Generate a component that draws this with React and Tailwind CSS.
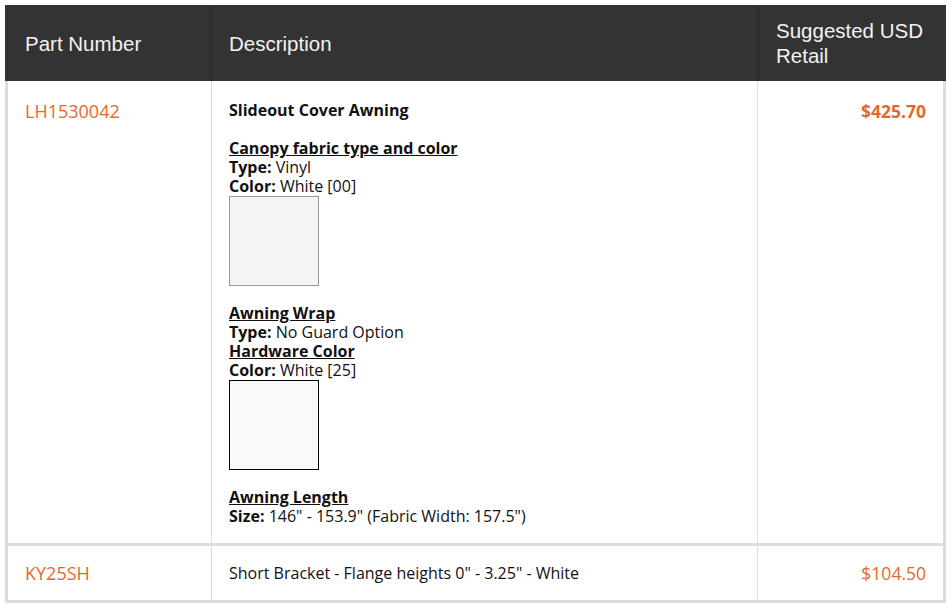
const ORANGE = 'text-[#df6a2c]';

const head = 'pl-5 pr-1 flex items-center whitespace-nowrap text-[20.5px] leading-[25px] text-[#f2f2f2]';

function Swatch({ dark }) {
  return (
    <div
      className={
        dark
          ? 'w-[90px] h-[90px] border border-black bg-[#f9f9f9]'
          : 'w-[90px] h-[90px] border border-[#9a9a9a] bg-[#f4f3f6]'
      }
    />
  );
}

function Line({ label, children }) {
  return (
    <div>
      <span className="font-bold">{label}</span> {children}
    </div>
  );
}

function Heading({ children }) {
  return <div className="font-bold underline underline-offset-1">{children}</div>;
}

export default function App() {
  return (
    <div className="bg-white min-h-screen p-[5px] pr-[6px]">
      <div className="w-[941px]">
        {/* Header */}
        <div
          className="grid grid-cols-[206px_547px_188px] h-[76px] bg-[#333333]"
          style={{ fontFamily: '"Liberation Sans", Arial, sans-serif' }}
        >
          <div className={head}>Part Number</div>
          <div className={`${head} border-l border-[#262626] pl-[17px]`}>Description</div>
          <div className={`${head} border-l border-[#262626] pl-[17px]`}>
            Suggested USD
            <br />
            Retail
          </div>
        </div>

        {/* Body */}
        <div
          className="border-x-[3px] border-b-[3px] border-[#dcdcdc] text-[#111] text-[16px] leading-[19px]"
          style={{ fontFamily: '"Open Sans", sans-serif' }}
        >
          <div className="grid grid-cols-[203px_547px_185px] border-b-[3px] border-[#dcdcdc]">
            <div className={`pl-[17px] pt-[18px] text-[18px] leading-[24px] ${ORANGE}`}>LH1530042</div>
            <div className="border-x border-[#dcdcdc] pl-[17px] pt-[20px] pb-[17px]">
              <div className="font-bold">Slideout Cover Awning</div>
              <div className="h-[19px]" />
              <Heading>Canopy fabric type and color</Heading>
              <Line label="Type:">Vinyl</Line>
              <Line label="Color:">White [00]</Line>
              <Swatch />
              <div className="h-[18px]" />
              <Heading>Awning Wrap</Heading>
              <Line label="Type:">No Guard Option</Line>
              <Heading>Hardware Color</Heading>
              <Line label="Color:">White [25]</Line>
              <Swatch dark />
              <div className="h-[18px]" />
              <Heading>Awning Length</Heading>
              <Line label="Size:">146" - 153.9" (Fabric Width: 157.5")</Line>
            </div>
            <div className={`pr-[17px] pt-[18px] text-right text-[17.5px] leading-[24px] font-bold ${ORANGE}`}>
              $425.70
            </div>
          </div>

          <div className="grid grid-cols-[203px_547px_185px] h-[54px]">
            <div className={`pl-[17px] flex items-center text-[18px] ${ORANGE}`}>KY25SH</div>
            <div className="border-x border-[#dcdcdc] pl-[17px] flex items-center">
              Short Bracket - Flange heights 0" - 3.25" - White
            </div>
            <div className={`pr-[17px] flex items-center justify-end text-[17.5px] ${ORANGE}`}>$104.50</div>
          </div>
        </div>
      </div>
    </div>
  );
}
